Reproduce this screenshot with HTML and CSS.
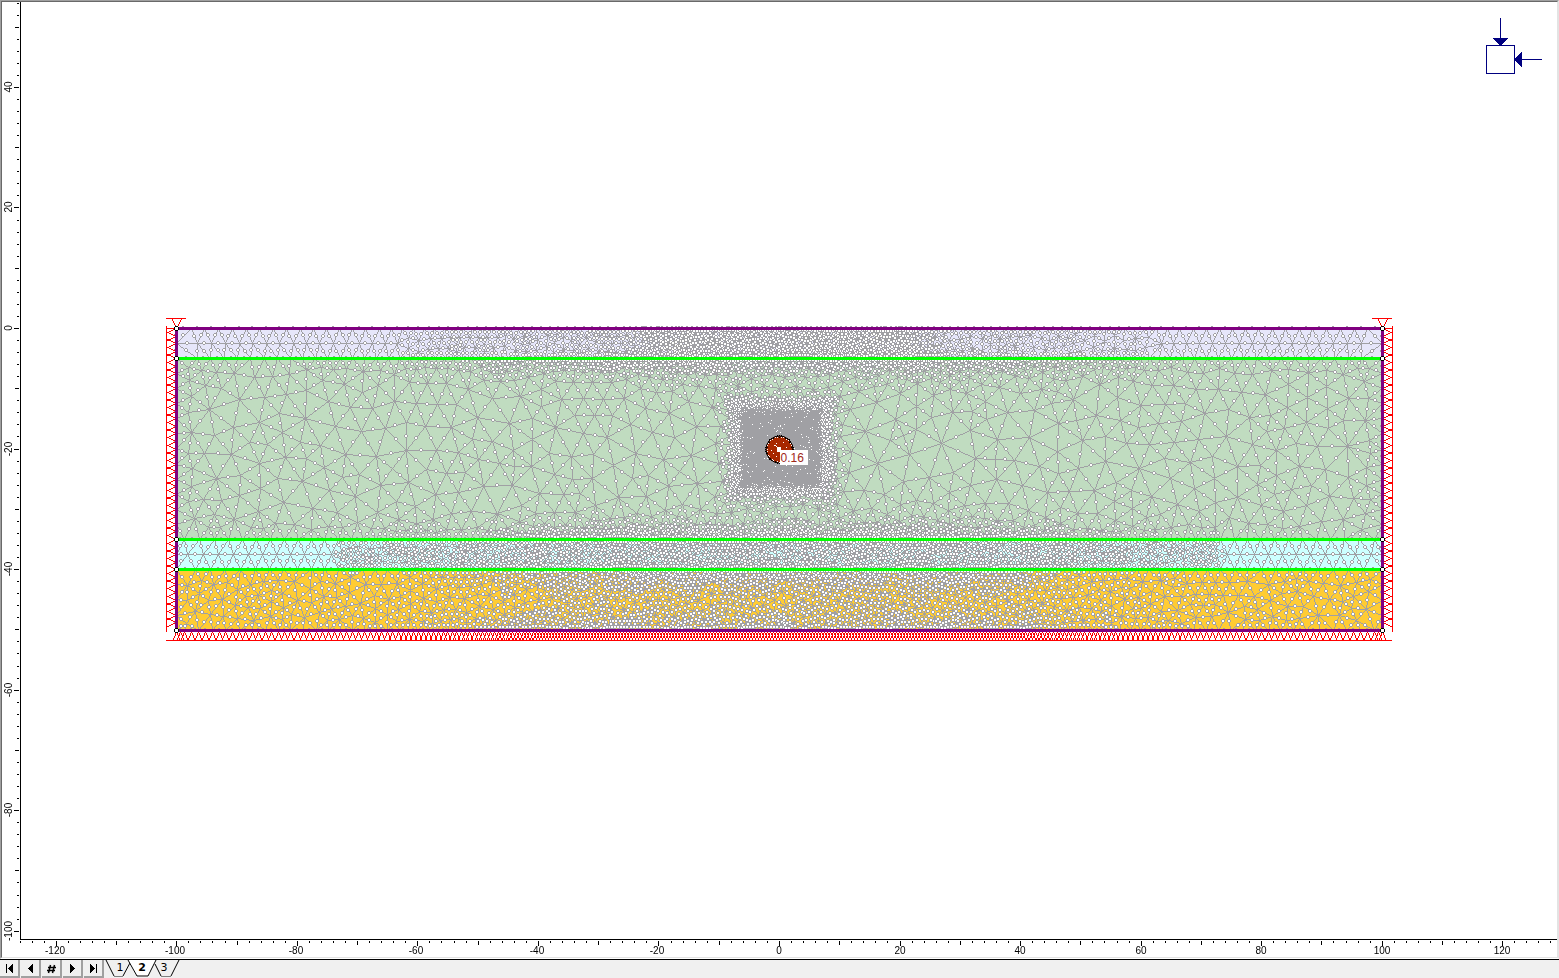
FILE: index.html
```html
<!DOCTYPE html>
<html lang="en">

<head>
    <meta charset="UTF-8">
    <meta name="viewport" content="width=device-width, initial-scale=1.0">
    <title>Tunnel model</title>
    <link rel="stylesheet" href="styles.css">
</head>

<body>

    <main class="frame">
        <div class="plot" id="plot">
            <canvas class="mesh" id="mesh"></canvas>
            <svg class="ruler" id="ruler"></svg>

            <!-- field stress block -->
            <svg class="stress" width="56" height="56" viewBox="0 0 56 56">
                <rect x="0.5" y="27.5" width="28" height="28" />
                <path d="M14.5 0V22M34 41.5H56" />
                <path class="head" d="M7 20H22L14.5 28ZM36 34V49L28 41.5Z" />
            </svg>

            <span class="value">0.16</span>
        </div>
    </main>

    <nav class="sheets">
        <button class="nav-btn" aria-label="First">
            <svg width="18" height="16"><path d="M6 4h1v9h-1zM13 4v9l-5-4.500z" /></svg>
        </button>
        <button class="nav-btn" aria-label="Previous">
            <svg width="18" height="16"><path d="M12 4v9l-5-4.500z" /></svg>
        </button>
        <button class="nav-btn" aria-label="Go to">
            <svg width="18" height="16"><path class="hash" d="M8.500 5L6.500 13M12.500 5L10.500 13M6 7.500h8M5 10.500h8" /></svg>
        </button>
        <button class="nav-btn" aria-label="Next">
            <svg width="18" height="16"><path d="M7 4v9l5-4.500z" /></svg>
        </button>
        <button class="nav-btn" aria-label="Last">
            <svg width="18" height="16"><path d="M6 4v9l5-4.500zM12 4h1v9h-1z" /></svg>
        </button>
        <div class="tabs">
            <svg class="tab-lines" width="76" height="18">
                <path class="side" d="M1 0L9 16M18 16L26 1M50 4L56 16M66 16L74 0" />
                <path class="base" d="M9 16.500H18M56 16.500H66" />
                <path class="active" d="M23 0L32 16H43L51 0" />
                <path class="base" d="M32 16.500H43" />
            </svg>
            <button class="tab">1</button>
            <button class="tab current">2</button>
            <button class="tab">3</button>
        </div>
    </nav>

    <script src="mesh.js"></script>
</body>

</html>
```
FILE: styles.css
```css
* {
    margin: 0;
    padding: 0;
    box-sizing: border-box;
}

body {
    display: flex;
    flex-direction: column;
    height: 100vh;
    overflow: hidden;
    background: #f0f0f0;
    font-family: "Liberation Sans", Arial, sans-serif;
}

.frame {
    flex: 1;
    min-height: 0;
    display: flex;
    border: 1px solid #a0a0a0;
    border-right-color: #e3e3e3;
    border-bottom-color: #fff;
}

.plot {
    flex: 1;
    min-width: 0;
    display: grid;
    position: relative;
    overflow: hidden;
    background: #fff;
    border: 1px solid #696969;
    border-right-color: #e3e3e3;
    border-bottom-color: #e3e3e3;
}

.mesh,
.ruler {
    grid-area: 1 / 1;
    width: 100%;
    height: 100%;
    min-width: 0;
    min-height: 0;
}

.ruler text {
    font-size: 10px;
    text-anchor: middle;
    fill: #000;
}

.ruler path {
    fill: none;
    stroke: #000;
    shape-rendering: crispEdges;
}

.stress {
    position: absolute;
    top: 16px;
    right: 15px;
    shape-rendering: crispEdges;
    fill: none;
    stroke: #000080;
}

.stress .head {
    fill: #000080;
    stroke: none;
}

/* value tag that hangs on the tunnel centre */
.value {
    position: absolute;
    top: 448px;
    left: 50%;
    height: 15px;
    padding: 0 4px 0 1px;
    background: #fff;
    color: #a02818;
    font-size: 12px;
    line-height: 16px;
}

.sheets {
    display: flex;
    height: 19px;
    border-top: 1px solid #000;
    background: #f0f0f0;
}

.nav-btn {
    width: 20px;
    height: 18px;
    margin-right: 1px;
    border: 0;
    border-right: 2px solid #a0a0a0;
    border-bottom: 2px solid #a0a0a0;
    background: #f0f0f0;
}

.nav-btn svg {
    display: block;
    shape-rendering: crispEdges;
}

.nav-btn .hash {
    fill: none;
    stroke: #000;
    stroke-width: 1.5;
    shape-rendering: auto;
}

.tabs {
    display: flex;
    position: relative;
    padding-left: 4px;
}

.tab-lines {
    position: absolute;
    top: 0;
    left: 0;
    fill: none;
}

.tab-lines .side {
    stroke: #000;
}

.tab-lines .base {
    stroke: #808080;
}

.tab-lines .active {
    fill: #fff;
    stroke: #000;
}

.tab {
    position: relative;
    width: 22px;
    height: 16px;
    border: 0;
    background: none;
    color: #000;
    font-family: "DejaVu Sans", sans-serif;
    font-size: 11px;
    line-height: 16px;
}

.tab.current {
    font-weight: bold;
}
```
FILE: mesh.js
```javascript
var SCALE = 6.027;  // pixels per metre
var TOP = 326;      // ground surface in the plot
var HALF = 603;
var LEVELS = [0, 30, 211, 241, 302];
var FILLS = ["#e6e6fa", "#c0dcc0", "#ccffff", "#ffcc33"];
var GREY = "#a0a0a4";
var CORE = { x0: -40, x1: 43, y0: 80, y1: 160 };

// element size along each level, as [distance from centre, size]
var SIZES = [
    [[0, 5], [135, 5], [160, 8], [350, 10], [400, 13], [603, 14]],
    [[0, 5], [135, 5], [230, 6], [350, 9], [400, 12], [603, 14]],
    [[0, 5], [150, 5], [240, 6], [330, 10], [430, 13], [603, 15]],
    [[0, 5], [150, 5], [240, 6], [330, 10], [430, 13], [603, 16]],
    [[0, 6], [140, 6], [230, 6], [320, 9], [420, 12], [603, 14]]
];

var seed = 7;
function rnd() {
    seed = (seed * 16807) % 2147483647;
    return seed / 2147483647;
}

function table(t, a) {
    a = Math.abs(a);
    for (var i = 1; i < t.length; i++) {
        if (a <= t[i][0]) {
            var f = (a - t[i - 1][0]) / (t[i][0] - t[i - 1][0]);
            return t[i - 1][1] + f * (t[i][1] - t[i - 1][1]);
        }
    }
    return t[t.length - 1][1];
}

function size(x, y) {
    var h, k = 0;
    while (k < 3 && y > LEVELS[k + 1]) k++;
    if (k == 0) return table(SIZES[0], x);
    if (k == 2) return table([[0, 6], [150, 6], [300, 7], [440, 8]], x);
    // sizes hold for a few pixels off the line, then grow
    var g = k == 1 ? 0.5 : 0.15, flat = k == 1 ? 8 : 4;
    h = Math.min(table(SIZES[k], x) + g * Math.max(y - LEVELS[k] - flat, 0),
        table(SIZES[k + 1], x) + g * Math.max(LEVELS[k + 1] - y - flat, 0), k == 1 ? 23 : 14);
    if (k == 1) {
        h = Math.min(h, 10 + 0.5 * (HALF - Math.abs(x)));
        var dx = Math.max(CORE.x0 - x, x - CORE.x1, 0);
        var dy = Math.max(CORE.y0 - y, y - CORE.y1, 0);
        var d = Math.max(dx, dy);
        h = Math.min(h, d < 11 ? 3.5 + 0.2 * d : 10 + 0.5 * (d - 11));
    }
    return h;
}

// Delaunay triangulation, sweeping the points by x
function circle(p, a, b, c) {
    var ax = p[a][0], ay = p[a][1];
    var bx = p[b][0] - ax, by = p[b][1] - ay;
    var cx = p[c][0] - ax, cy = p[c][1] - ay;
    var d = 2 * (bx * cy - by * cx);
    var b2 = bx * bx + by * by, c2 = cx * cx + cy * cy;
    var ux = (cy * b2 - by * c2) / d, uy = (bx * c2 - cx * b2) / d;
    return { a: a, b: b, c: c, x: ax + ux, y: ay + uy, r: ux * ux + uy * uy };
}

function triangulate(pts) {
    var n = pts.length;
    var p = pts.concat([[-20000, -15000], [0, 20000], [20000, -15000]]);
    var order = [];
    for (var i = 0; i < n; i++) order.push(i);
    order.sort(function (a, b) { return p[a][0] - p[b][0]; });
    var open = [circle(p, n, n + 1, n + 2)], closed = [];
    order.forEach(function (i) {
        var edges = new Map(), keep = [];
        function toggle(a, b) {
            var key = Math.min(a, b) * 100000 + Math.max(a, b);
            if (edges.has(key)) edges.delete(key);
            else edges.set(key, [a, b]);
        }
        open.forEach(function (t) {
            var dx = p[i][0] - t.x, dy = p[i][1] - t.y;
            if (dx > 0 && dx * dx > t.r) {
                closed.push(t);
            } else if (dx * dx + dy * dy < t.r) {
                toggle(t.a, t.b);
                toggle(t.b, t.c);
                toggle(t.c, t.a);
            } else {
                keep.push(t);
            }
        });
        edges.forEach(function (e) { keep.push(circle(p, e[0], e[1], i)); });
        open = keep;
    });
    return closed.concat(open).filter(function (t) {
        return t.a < n && t.b < n && t.c < n;
    });
}

function edgesOf(tris) {
    var seen = new Map();
    tris.forEach(function (t) {
        [[t.a, t.b], [t.b, t.c], [t.c, t.a]].forEach(function (e) {
            seen.set(Math.min(e[0], e[1]) * 100000 + Math.max(e[0], e[1]), e);
        });
    });
    return Array.from(seen.values());
}

function buildMesh() {
    var pts = [], cells = {}, bottom = [], sides = [];

    function add(x, y, fixed) {
        pts.push([x + (rnd() - 0.5) * 0.002, y + (rnd() - 0.5) * 0.002, fixed]);
        var key = Math.floor(x / 12) + "," + Math.floor(y / 12);
        (cells[key] = cells[key] || []).push([x, y]);
    }

    function free(x, y, r) {
        var cx = Math.floor(x / 12), cy = Math.floor(y / 12);
        for (var i = cx - 2; i <= cx + 2; i++) {
            for (var j = cy - 2; j <= cy + 2; j++) {
                var list = cells[i + "," + j] || [];
                for (var k = 0; k < list.length; k++) {
                    var dx = list[k][0] - x, dy = list[k][1] - y;
                    if (dx * dx + dy * dy < r * r) return false;
                }
            }
        }
        return true;
    }

    // points on the layer lines
    LEVELS.forEach(function (y, k) {
        var x = 0;
        add(0, y, true);
        if (k == 4) bottom.push(0);
        while (true) {
            var h = table(SIZES[k], x);
            if (x + h * 1.5 > HALF) h = HALF - x;
            x += h;
            add(x, y, true);
            add(-x, y, true);
            if (k == 4) bottom.push(x, -x, x - h / 2, h / 2 - x);
            if (x >= HALF) break;
        }
    });

    // points on the side walls
    for (var k = 0; k < 4; k++) {
        var len = LEVELS[k + 1] - LEVELS[k];
        var n = Math.round(len / 14.5);
        for (var i = 0; i < n; i++) {
            var y = LEVELS[k] + i * len / n;
            sides.push(y, y + len / n / 2);
            if (i) {
                add(-HALF, y, true);
                add(HALF, y, true);
            }
        }
    }

    // the coarse part of the thin layers has one regular middle row
    [[15, 370, 0], [226, 440, 3]].forEach(function (row) {
        var x = 0;
        while (x < HALF - 16) {
            var h = table(SIZES[row[2]], x);
            if (x > row[1]) {
                add(x + h / 2, row[0], true);
                add(-x - h / 2, row[0], true);
            }
            x += h;
        }
    });

    for (var m = 0; m < 260000; m++) {
        var px, py;
        if (m % 4 == 0) {
            px = -70 + rnd() * 144;
            py = 55 + rnd() * 130;
        } else {
            px = (rnd() * 2 - 1) * HALF;
            py = rnd() * 302;
        }
        if (px > CORE.x0 + 4 && px < CORE.x1 - 4 && py > CORE.y0 + 4 && py < CORE.y1 - 4) continue;
        var a = Math.abs(px);
        if (py < 30 && a > 370 || py > 211 && py < 241 && a > 440) continue;
        if (free(px, py, size(px, py) * 0.8)) add(px, py, false);
    }

    var edges = edgesOf(triangulate(pts));

    // smooth the free points
    for (var pass = 0; pass < 2; pass++) {
        var sum = pts.map(function () { return [0, 0, 0]; });
        edges.forEach(function (e) {
            for (var s = 0; s < 2; s++) {
                var q = pts[e[1 - s]], t = sum[e[s]];
                t[0] += q[0];
                t[1] += q[1];
                t[2]++;
            }
        });
        pts.forEach(function (q, i) {
            if (!q[2]) {
                q[0] = sum[i][0] / sum[i][2];
                q[1] = sum[i][1] / sum[i][2];
            }
        });
        edges = edgesOf(triangulate(pts));
    }
    return { pts: pts, edges: edges, bottom: bottom, sides: sides };
}

var model = buildMesh();

function draw() {
    var canvas = document.getElementById("mesh");
    var w = canvas.width = canvas.clientWidth;
    var h = canvas.height = canvas.clientHeight;
    var ox = Math.floor(w / 2);
    var ctx = canvas.getContext("2d");
    ctx.translate(ox, TOP);

    function rect(color, x, y, rw, rh) {
        ctx.fillStyle = color;
        ctx.fillRect(x, y, rw, rh);
    }

    // one pixel line without smoothing
    function line(x0, y0, x1, y1) {
        var n = Math.max(Math.abs(x1 - x0), Math.abs(y1 - y0), 1);
        for (var i = 0; i <= n; i++) {
            ctx.fillRect(Math.round(x0 + (x1 - x0) * i / n), Math.round(y0 + (y1 - y0) * i / n), 1, 1);
        }
    }

    for (var k = 0; k < 4; k++) {
        rect(FILLS[k], -HALF, LEVELS[k], HALF * 2, LEVELS[k + 1] - LEVELS[k]);
    }

    ctx.fillStyle = GREY;
    model.edges.forEach(function (e) {
        var a = model.pts[e[0]], b = model.pts[e[1]];
        line(Math.round(a[0]), Math.round(a[1]), Math.round(b[0]), Math.round(b[1]));
    });
    // mid-side nodes
    model.edges.forEach(function (e) {
        var a = model.pts[e[0]], b = model.pts[e[1]];
        var x = Math.round((a[0] + b[0]) / 2), y = Math.round((a[1] + b[1]) / 2);
        rect(GREY, x - 2, y - 1, 4, 2);
        rect(GREY, x - 1, y - 2, 2, 4);
        rect("#fff", x - 1, y - 1, 2, 2);
    });

    // refined zone round the tunnel
    rect(GREY, CORE.x0, CORE.y0, CORE.x1 - CORE.x0, CORE.y1 - CORE.y0);
    seed = 11;
    for (var i = 0; i < 150; i++) {
        rect("#fff", CORE.x0 + Math.floor(rnd() * 82), CORE.y0 + Math.floor(rnd() * 79), 1, 1);
    }
    for (i = 0; i < 200; i++) {
        var t = rnd() * 82, d = rnd() * rnd() * 6, s = rnd();
        if (s < 0.25) rect("#fff", Math.round(CORE.x0 + t), Math.round(CORE.y0 + d), 1, 1);
        else if (s < 0.5) rect("#fff", Math.round(CORE.x0 + t), Math.round(CORE.y1 - d), 1, 1);
        else if (s < 0.75) rect("#fff", Math.round(CORE.x0 + d), Math.round(CORE.y0 + t * 0.95), 1, 1);
        else rect("#fff", Math.round(CORE.x1 - d), Math.round(CORE.y0 + t * 0.95), 1, 1);
    }

    // supports
    ctx.fillStyle = "#f00";
    line(-613, 312, 612, 312);
    line(-613, -2, -613, 303);
    line(613, -2, 613, 303);
    model.bottom.forEach(function (x) {
        x = Math.round(x);
        line(x, 303, x - 3, 311);
        line(x, 303, x + 3, 311);
    });
    model.sides.forEach(function (y) {
        y = Math.round(y);
        line(-HALF, y, -612, y + 4);
        line(-HALF, y, -612, Math.max(y - 4, 0));
        line(HALF, y, 612, y + 4);
        line(HALF, y, 612, Math.max(y - 4, 0));
    });
    [-HALF, HALF].forEach(function (x) {
        line(x - 10, -10, x + 9, -10);
        line(x, 0, x - 5, -10);
        line(x, 0, x + 5, -10);
    });

    // layer lines and outer boundary
    for (k = 1; k < 4; k++) rect("#0f0", -HALF, LEVELS[k] - 1, HALF * 2, 3);
    rect("#800080", -HALF, -1, HALF * 2, 3);
    rect("#800080", -HALF, 301, HALF * 2, 3);
    rect("#800080", -HALF - 1, 0, 3, 303);
    rect("#800080", HALF - 1, 0, 3, 303);
    LEVELS.forEach(function (y) {
        [-HALF, HALF].forEach(function (x) {
            rect("#000", x - 2, y - 1, 5, 3);
            rect("#000", x - 1, y - 2, 3, 5);
            rect("#fff", x - 1, y - 1, 3, 3);
        });
    });

    // tunnel
    ctx.beginPath();
    ctx.arc(0.5, 121.5, 13.5, 0, Math.PI * 2);
    ctx.fillStyle = "#a82800";
    ctx.fill();
    ctx.lineWidth = 1;
    ctx.strokeStyle = "#000";
    ctx.stroke();
    for (i = 0; i < 40; i++) {
        var a = i * Math.PI / 20;
        rect("#000", Math.round(Math.cos(a) * 14), Math.round(121 + Math.sin(a) * 14), 1, 1);
        rect(i % 3 ? "#fff" : "#000", Math.round(Math.cos(a) * 12.5), Math.round(121 + Math.sin(a) * 12.5), 1, 1);
    }
    ctx.fillStyle = "#fff";
    [[-5, -4], [-3, -6], [4, -7], [-8, 1], [-6, 4], [7, -2], [-3, 7]].forEach(function (s) {
        ctx.fillRect(s[0], 121 + s[1], 1, 1);
    });
    line(-4, 117, 0, 121);
    rect("#fff", -2, 119, 4, 5);

    drawRuler(w, h, ox);
}

function drawRuler(w, h, ox) {
    var base = h - 18;
    var d = "M18.5 0V" + base + "M18 " + (base + 0.5) + "H" + w;
    var text = "";
    function reach(v) {
        return v % 20 == 0 ? 5 : v % 10 == 0 ? 4 : 2;
    }
    for (var v = -200; v <= 200; v += 2) {
        var x = Math.round(ox + v * SCALE), y = Math.round(TOP - v * SCALE);
        if (x >= 18 && x < w) {
            d += "M" + (x + 0.5) + " " + (base + 2) + "v" + reach(v);
            // the minus sign pulls the label a pixel to the left
            if (v % 20 == 0) text += '<text x="' + (v < 0 ? x - 1 : x) + '" y="' + (base + 15) + '">' + v + "</text>";
        }
        if (y >= 0 && y < base) {
            d += "M17 " + (y + 0.5) + "h-" + reach(v);
            if (v % 20 == 0) text += '<text transform="translate(10 ' + y + ') rotate(-90)">' + v + "</text>";
        }
    }
    document.getElementById("ruler").innerHTML = '<path d="' + d + '"/>' + text;
}

window.onload = draw;
window.onresize = draw;
```
